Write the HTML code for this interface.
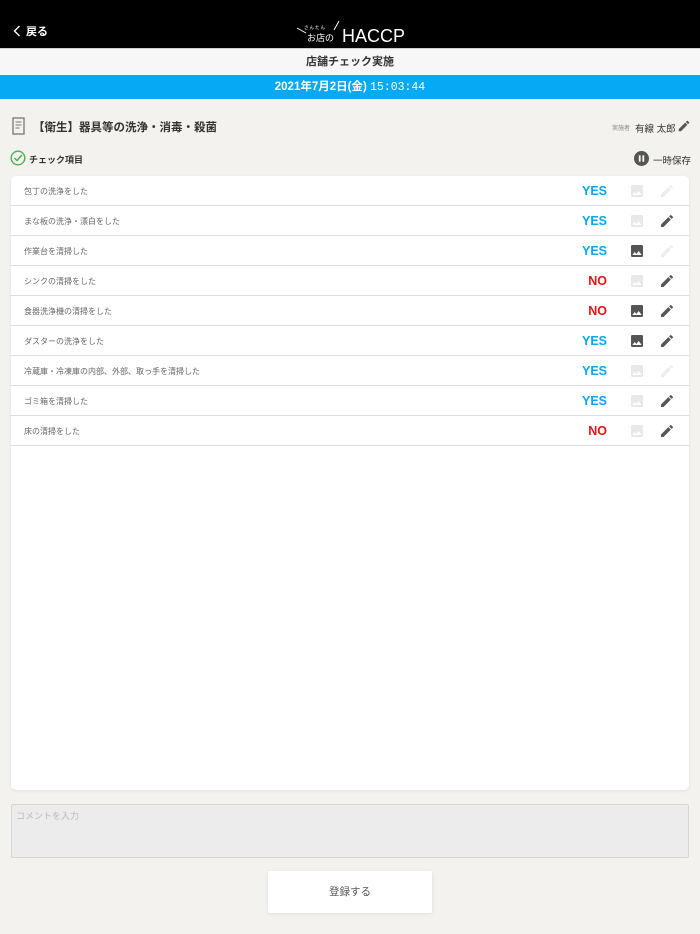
<!DOCTYPE html>
<html><head><meta charset="utf-8"><style>
*{margin:0;padding:0;box-sizing:border-box}
body{width:700px;height:934px;background:#f3f2ef;font-family:"Liberation Sans","Noto Sans CJK JP",sans-serif;position:relative;overflow:hidden;color:#333}
.top{position:absolute;left:0;top:0;width:700px;height:48px;background:#000;color:#fff}
.back{position:absolute;left:14px;top:23px;font-size:11px;font-weight:bold}
.logo{position:absolute;left:296px;top:18px;width:120px;height:28px}
.sub{position:absolute;top:48px;left:0;width:700px;height:27px;background:#f7f7f7;border-top:1px solid #ccc;text-align:center;font-size:11px;font-weight:bold;line-height:27px}
.date{position:absolute;top:75px;left:0;width:700px;height:24px;background:#05a9f4;color:#fff;text-align:center;font-weight:bold;font-size:11.5px;line-height:24px}
.date span{font-family:"Liberation Mono",monospace;font-weight:normal;font-size:11.5px}
.title{position:absolute;left:33px;top:119px;font-size:11.5px;font-weight:bold}
.check{position:absolute;left:29px;top:153px;font-size:9px;font-weight:bold}
.card{position:absolute;left:11px;top:176px;width:678px;height:614px;background:#fff;border-radius:5px;box-shadow:0 1px 3px rgba(0,0,0,.08)}
.row{height:30px;border-bottom:1px solid #ddd;position:relative}
.row .t{position:absolute;left:13px;top:10px;font-size:8px;color:#666}
.row .a{position:absolute;right:82px;top:8px;font-size:12.5px;font-weight:bold}
.yes{color:#05a9f4}.no{color:#e61515}
.row svg{position:absolute;top:7px}
.comment{position:absolute;left:11px;top:804px;width:678px;height:54px;background:#ececec;border:1px solid #d6d6d6;border-radius:2px;font-size:9px;color:#bbb;padding:4px 4px}
.btn{position:absolute;left:268px;top:871px;width:164px;height:42px;background:#fff;border-radius:2px;box-shadow:0 1px 5px rgba(0,0,0,.08);text-align:center;line-height:42px;font-size:10.5px;color:#555}
</style></head><body>
<div class="top">
<svg style="position:absolute;left:13px;top:25px" width="8" height="12" viewBox="0 0 8 12"><path d="M6.5 1 L1.5 6 L6.5 11" stroke="#fff" stroke-width="1.4" fill="none"/></svg>
<div class="back" style="left:26px">戻る</div>
<svg class="logo" viewBox="0 0 120 28"><path d="M1 10 L10 15" stroke="#fff" stroke-width="1"/><path d="M38 12 L43 3" stroke="#fff" stroke-width="1"/>
<text x="8" y="11" fill="#fff" font-size="4.5" font-family="Noto Sans CJK JP">さ ん た ん</text>
<text x="11" y="23" fill="#fff" font-size="9" font-family="Noto Sans CJK JP,sans-serif">お店の</text>
<text x="46" y="24" fill="#fff" font-size="18" font-family="Liberation Sans">HACCP</text></svg>
</div>
<div class="sub">店舗チェック実施</div>
<div class="date">2021年7月2日(金) <span>15:03:44</span></div>
<svg style="position:absolute;left:12px;top:117px" width="13" height="18" viewBox="0 0 13 18"><rect x="1" y="1" width="11" height="16" fill="none" stroke="#777" stroke-width="1.3"/><path d="M3.5 5h6M3.5 8h6M3.5 11h4" stroke="#777" stroke-width="1"/></svg>
<div class="title">【衛生】器具等の洗浄・消毒・殺菌</div>
<div style="position:absolute;left:612px;top:123px;font-size:6px;color:#888">実施者</div>
<div style="position:absolute;left:635px;top:121px;font-size:9.5px">有線 太郎</div>
<svg style="position:absolute;left:677px;top:119px" width="14" height="14" viewBox="0 0 24 24"><path d="M3 17.25V21h3.75L17.81 9.94l-3.75-3.75L3 17.25zM20.71 7.04a1 1 0 000-1.41l-2.34-2.34a1 1 0 00-1.41 0l-1.83 1.83 3.75 3.75 1.83-1.83z" fill="#555"/></svg>
<svg style="position:absolute;left:10px;top:150px" width="16" height="16" viewBox="0 0 16 16"><circle cx="8" cy="8" r="6.8" fill="none" stroke="#4cb050" stroke-width="1.4"/><path d="M4.5 8 L7 10.5 L12 5" stroke="#4cb050" stroke-width="1.5" fill="none"/></svg>
<div class="check">チェック項目</div>
<svg style="position:absolute;left:634px;top:151px" width="15" height="15" viewBox="0 0 15 15"><circle cx="7.5" cy="7.5" r="7.5" fill="#555"/><rect x="4.8" y="4.3" width="1.8" height="6.4" fill="#fff"/><rect x="8.4" y="4.3" width="1.8" height="6.4" fill="#fff"/></svg>
<div style="position:absolute;left:653px;top:153px;font-size:9.5px">一時保存</div>
<div class="card"></div>
<div class="comment">コメントを入力</div>
<div class="btn">登録する</div>
<script>
var d=[["包丁の洗浄をした",1,0,0],["まな板の洗浄・漂白をした",1,0,1],["作業台を清掃した",1,1,0],["シンクの清掃をした",0,0,1],["食器洗浄機の清掃をした",0,1,1],["ダスターの洗浄をした",1,1,1],["冷蔵庫・冷凍庫の内部、外部、取っ手を清掃した",1,0,0],["ゴミ箱を清掃した",1,0,1],["床の清掃をした",0,0,1]];
var h="";d.forEach(function(r){var ic=r[2]?"#555":"#e8e8e8",pc=r[3]?"#555":"#ececec";
h+='<div class="row"><div class="t">'+r[0]+'</div><div class="a '+(r[1]?'yes">YES':'no">NO')+'</div>'+
'<svg style="left:618px" width="16" height="16" viewBox="0 0 24 24"><path d="M21 19V5a2 2 0 00-2-2H5a2 2 0 00-2 2v14a2 2 0 002 2h14a2 2 0 002-2zM8.5 13.5l2.5 3 3.5-4.5 4.5 6H5l3.5-4.5z" fill="'+ic+'"/></svg>'+
'<svg style="left:648px" width="16" height="16" viewBox="0 0 24 24"><path d="M3 17.25V21h3.75L17.81 9.94l-3.75-3.75L3 17.25zM20.71 7.04a1 1 0 000-1.41l-2.34-2.34a1 1 0 00-1.41 0l-1.83 1.83 3.75 3.75 1.83-1.83z" fill="'+pc+'"/></svg></div>';});
document.querySelector(".card").innerHTML=h;
</script>
</body></html>
